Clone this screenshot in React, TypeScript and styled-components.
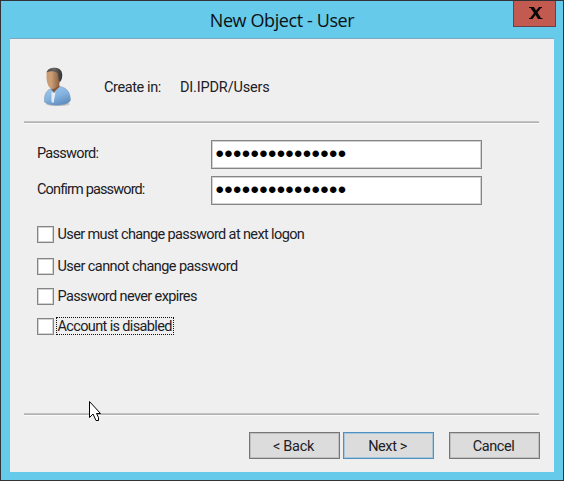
import React from "react";
import styled, { createGlobalStyle } from "styled-components";

const GlobalStyle = createGlobalStyle`
  * { box-sizing: border-box; }
  body { margin: 0; overflow: hidden; }
`;

const Window = styled.div`
  position: relative;
  display: flex;
  flex-direction: column;
  width: 564px;
  height: 481px;
  padding: 0 9px 8px;
  border: 1px solid #323337;
  background: #66caea;
  font-family: Roboto, "Liberation Sans", sans-serif;
  font-size: 14.5px;
  color: #202024;
`;

const TitleBar = styled.header`
  display: flex;
  justify-content: center;
  height: 37px;
`;

const Title = styled.h1`
  margin: 0;
  font: 400 18px/39px "Open Sans", "Noto Sans", sans-serif;
  letter-spacing: -0.4px;
  color: #0b1114;
  white-space: nowrap;
`;

const CloseButton = styled.button`
  position: absolute;
  top: 0;
  right: 7px;
  display: grid;
  place-items: center;
  width: 43px;
  height: 26px;
  padding: 0 0 2px 2px;
  border: 1px solid #6b4044;
  border-top: 0;
  background: #c35a50;
`;

const Client = styled.main`
  display: flex;
  flex-direction: column;
  flex: 1;
  width: 544px;
  padding: 0 14px;
  border-top: 1px solid #7ba9c2;
  background: #efefef;
`;

const Heading = styled.section`
  display: flex;
  align-items: center;
  height: 82px;
  padding: 13px 0 0 18px;
`;

const Avatar = styled.svg`
  width: 32px;
  height: 42px;
  margin-right: 30px;
`;

const Text = styled.span<{ $spacing: number; $width?: number }>`
  display: block;
  width: ${(p) => (p.$width ? `${p.$width}px` : "auto")};
  letter-spacing: ${(p) => p.$spacing}px;
  line-height: 18px;
  padding-top: 2px;
  white-space: nowrap;
`;

const Divider = styled.hr`
  width: 515px;
  height: 3px;
  margin: 0;
  border: 0;
  background: linear-gradient(#c4c4c4 0 1px, #b1b1b1 1px 2px, #fafafa 2px);
`;

const Fields = styled.section`
  display: grid;
  grid-template-columns: 174px 271px;
  grid-template-rows: 29px 29px;
  row-gap: 7px;
  padding: 16px 0 0 13px;
`;

const FieldLabel = styled.label`
  padding-top: 3px;
`;

const PasswordBox = styled.div`
  height: 29px;
  padding-left: 3.5px;
  overflow: hidden;
  border: 1px solid #858585;
  outline: 1px solid #d2d2d2;
  outline-offset: -2px;
  background: #fff;
  color: #000;
  font: 24px/25px "Liberation Sans", sans-serif;
  letter-spacing: 0.33px;
`;

const Options = styled.section`
  display: grid;
  grid-template-rows: 32px 30px 30px 30px;
  padding: 21px 0 0 13px;
`;

const Option = styled.label`
  display: flex;
  align-items: flex-start;
  gap: 2px;
`;

const CheckBox = styled.span`
  width: 17px;
  height: 17px;
  border: 1px solid #858585;
  box-shadow: inset 0 0 0 1px #d2d2d2;
  background: #fff;
`;

const OptionText = styled.span<{ $focused?: boolean }>`
  height: 18px;
  margin-top: -1px;
  padding: 0 1px 0 0.5px;
  border: 1px dotted ${(p) => (p.$focused ? "#111" : "transparent")};
  > span { padding-top: 1px; line-height: 16px; }
`;

const Footer = styled.footer`
  display: flex;
  justify-content: flex-end;
  width: 516px;
  height: 56px;
  padding-top: 16px;
`;

const Button = styled.button<{ $primary?: boolean; $gap?: number }>`
  display: grid;
  place-items: center;
  width: 91px;
  height: 27px;
  margin-left: ${(p) => p.$gap ?? 0}px;
  padding: 0 2px 0 0;
  border: 1px solid ${(p) => (p.$primary ? "#4e90bf" : "#767676")};
  box-shadow: inset 0 0 0 1px ${(p) => (p.$primary ? "#a9c6da" : "#c0c0c0")};
  background: #dcdcdc;
  color: #202024;
  font: inherit;
`;

const Cursor = styled.svg`
  position: absolute;
  left: 87px;
  top: 398px;
  width: 15px;
  height: 24px;
`;

const Spacer = styled.div`
  flex: 1;
`;

const MASK = "•".repeat(15);

const options = [
  { label: "User must change password at next logon", spacing: -0.62 },
  { label: "User cannot change password", spacing: -0.56 },
  { label: "Password never expires", spacing: -0.62 },
  { label: "Account is disabled", spacing: -0.64, focused: true },
];

function UserIcon() {
  return (
    <Avatar viewBox="0 0 32 42" aria-hidden="true">
      <defs>
        <linearGradient id="shirt" x1="0" y1="0" x2="0.5" y2="1">
          <stop offset="0" stopColor="#a6cdee" />
          <stop offset="0.6" stopColor="#84b3df" />
          <stop offset="1" stopColor="#6290c2" />
        </linearGradient>
        <linearGradient id="skin">
          <stop offset="0" stopColor="#c99b72" />
          <stop offset="0.35" stopColor="#cb9e76" />
          <stop offset="1" stopColor="#805336" />
        </linearGradient>
        <linearGradient id="hair">
          <stop offset="0" stopColor="#4b4743" />
          <stop offset="0.5" stopColor="#666462" />
          <stop offset="1" stopColor="#333" />
        </linearGradient>
      </defs>
      <ellipse cx="16" cy="38" rx="12" ry="2" fill="#aaa" opacity=".6" />
      <path d="M2.5 36 C2 29 4 25 8 23 L18 20.5 C25 22 28 26 28.5 34 C27 40 8 41 2.5 36Z" fill="url(#shirt)" stroke="#7093b2" strokeWidth=".5" />
      <path d="M9.5 26 L12 27 L13.5 26.5 L11.5 37 L9.5 36Z" fill="#e6edf5" />
      <path d="M9 18 L17 14 L17.5 21 C15 23 13 25 12 26.5 L9 23Z" fill="#85583a" />
      <path d="M4.5 8 C4.5 3 16 2 18.5 9 C19 16 16 23 10 23 C6 22 4 15 4.5 8Z" fill="url(#skin)" />
      <path d="M4.5 6.5 C6 2 11 1.5 15 2 C21 3 21.5 11 18.5 15.5 C17 16 16.5 14 16.5 12 L15.5 7 C11 4.5 8 5 4.5 6.5Z" fill="url(#hair)" />
    </Avatar>
  );
}

export default function App() {
  return (
    <>
      <GlobalStyle />
      <Window>
        <TitleBar>
          <Title>New Object - User</Title>
        </TitleBar>
        <CloseButton aria-label="Close">
          <svg width="14" height="12" viewBox="0 0 14 12" aria-hidden="true">
            <path d="M0 0H5L7 3.5L10 0H13V1H12L8.5 5.5L12 11H13.5V12H9L6.5 8L3.5 12H0V11H1.2L5 6L1.5 1H0Z" fill="#090909" />
          </svg>
        </CloseButton>
        <Client>
          <Heading>
            <UserIcon />
            <Text $width={76} $spacing={-0.4}>Create in:</Text>
            <Text $spacing={-0.17}>DI.IPDR/Users</Text>
          </Heading>
          <Divider />
          <Fields>
            <FieldLabel><Text $spacing={-0.7}>Password:</Text></FieldLabel>
            <PasswordBox>{MASK}</PasswordBox>
            <FieldLabel><Text $spacing={-0.86}>Confirm password:</Text></FieldLabel>
            <PasswordBox>{MASK}</PasswordBox>
          </Fields>
          <Options>
            {options.map((option) => (
              <Option key={option.label}>
                <CheckBox />
                <OptionText $focused={option.focused}>
                  <Text $spacing={option.spacing}>{option.label}</Text>
                </OptionText>
              </Option>
            ))}
          </Options>
          <Spacer />
          <Divider />
          <Footer>
            <Button><Text $spacing={-0.3}>&lt; Back</Text></Button>
            <Button $primary $gap={3}><Text $spacing={-0.4}>Next &gt;</Text></Button>
            <Button $gap={15}><Text $spacing={-0.4}>Cancel</Text></Button>
          </Footer>
        </Client>
        <Cursor viewBox="0 0 15 24" aria-hidden="true">
          <path d="M1.5 2.5V18.5L5 15L8 21.5H10.5V18.5L8.5 14.5H12.5Z" fill="#fff" stroke="#000" />
        </Cursor>
      </Window>
    </>
  );
}
